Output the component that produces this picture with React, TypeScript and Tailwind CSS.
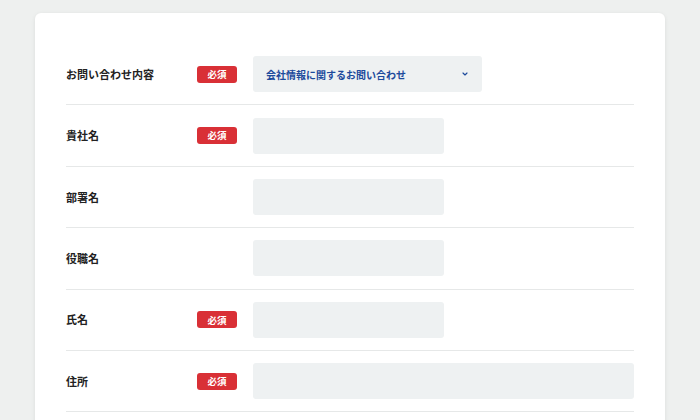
import { ChevronDown } from "lucide-react";

type Field = {
  label: string;
  required?: boolean;
  width: string;
  select?: string;
};

const fields: Field[] = [
  { label: "お問い合わせ内容", required: true, width: "w-[229px]", select: "会社情報に関するお問い合わせ" },
  { label: "貴社名", required: true, width: "w-[191px]" },
  { label: "部署名", width: "w-[191px]" },
  { label: "役職名", width: "w-[191px]" },
  { label: "氏名", required: true, width: "w-[191px]" },
  { label: "住所", required: true, width: "flex-1" },
];

export default function App() {
  return (
    <div
      className="h-[420px] w-full overflow-hidden bg-[#eef0ef] px-[35px] pt-[13px]"
      style={{ fontFamily: '"Noto Sans CJK JP", "Noto Sans", sans-serif' }}
    >
      <div className="rounded-[6px] bg-white px-[31px] pt-[31px] pb-8 shadow-[0_1px_4px_rgba(0,0,0,0.08)]">
        {fields.map((f) => (
          <div
            key={f.label}
            className="flex items-center border-b border-[#e6e8e8] py-[12.2px]"
          >
            <div className="w-[131px] text-[11px] font-bold text-[#222]">{f.label}</div>
            <div className="mr-[16px] w-[40px]">
              {f.required && (
                <span className="flex h-[17px] w-[40px] items-center justify-center rounded-[3px] bg-[#d93036] text-[9.5px] font-bold text-white">
                  必須
                </span>
              )}
            </div>
            {f.select ? (
              <div
                className={`${f.width} flex h-[36px] items-center justify-between rounded-[3px] bg-[#eef1f2] pl-[13px] pr-[13px]`}
              >
                <span className="text-[10px] font-bold text-[#1c4a9c]">{f.select}</span>
                <ChevronDown className="h-[8px] w-[8px] text-[#1c4a9c]" strokeWidth={3.5} />
              </div>
            ) : (
              <div className={`${f.width} h-[36px] rounded-[3px] bg-[#eef1f2]`} />
            )}
          </div>
        ))}
      </div>
    </div>
  );
}
